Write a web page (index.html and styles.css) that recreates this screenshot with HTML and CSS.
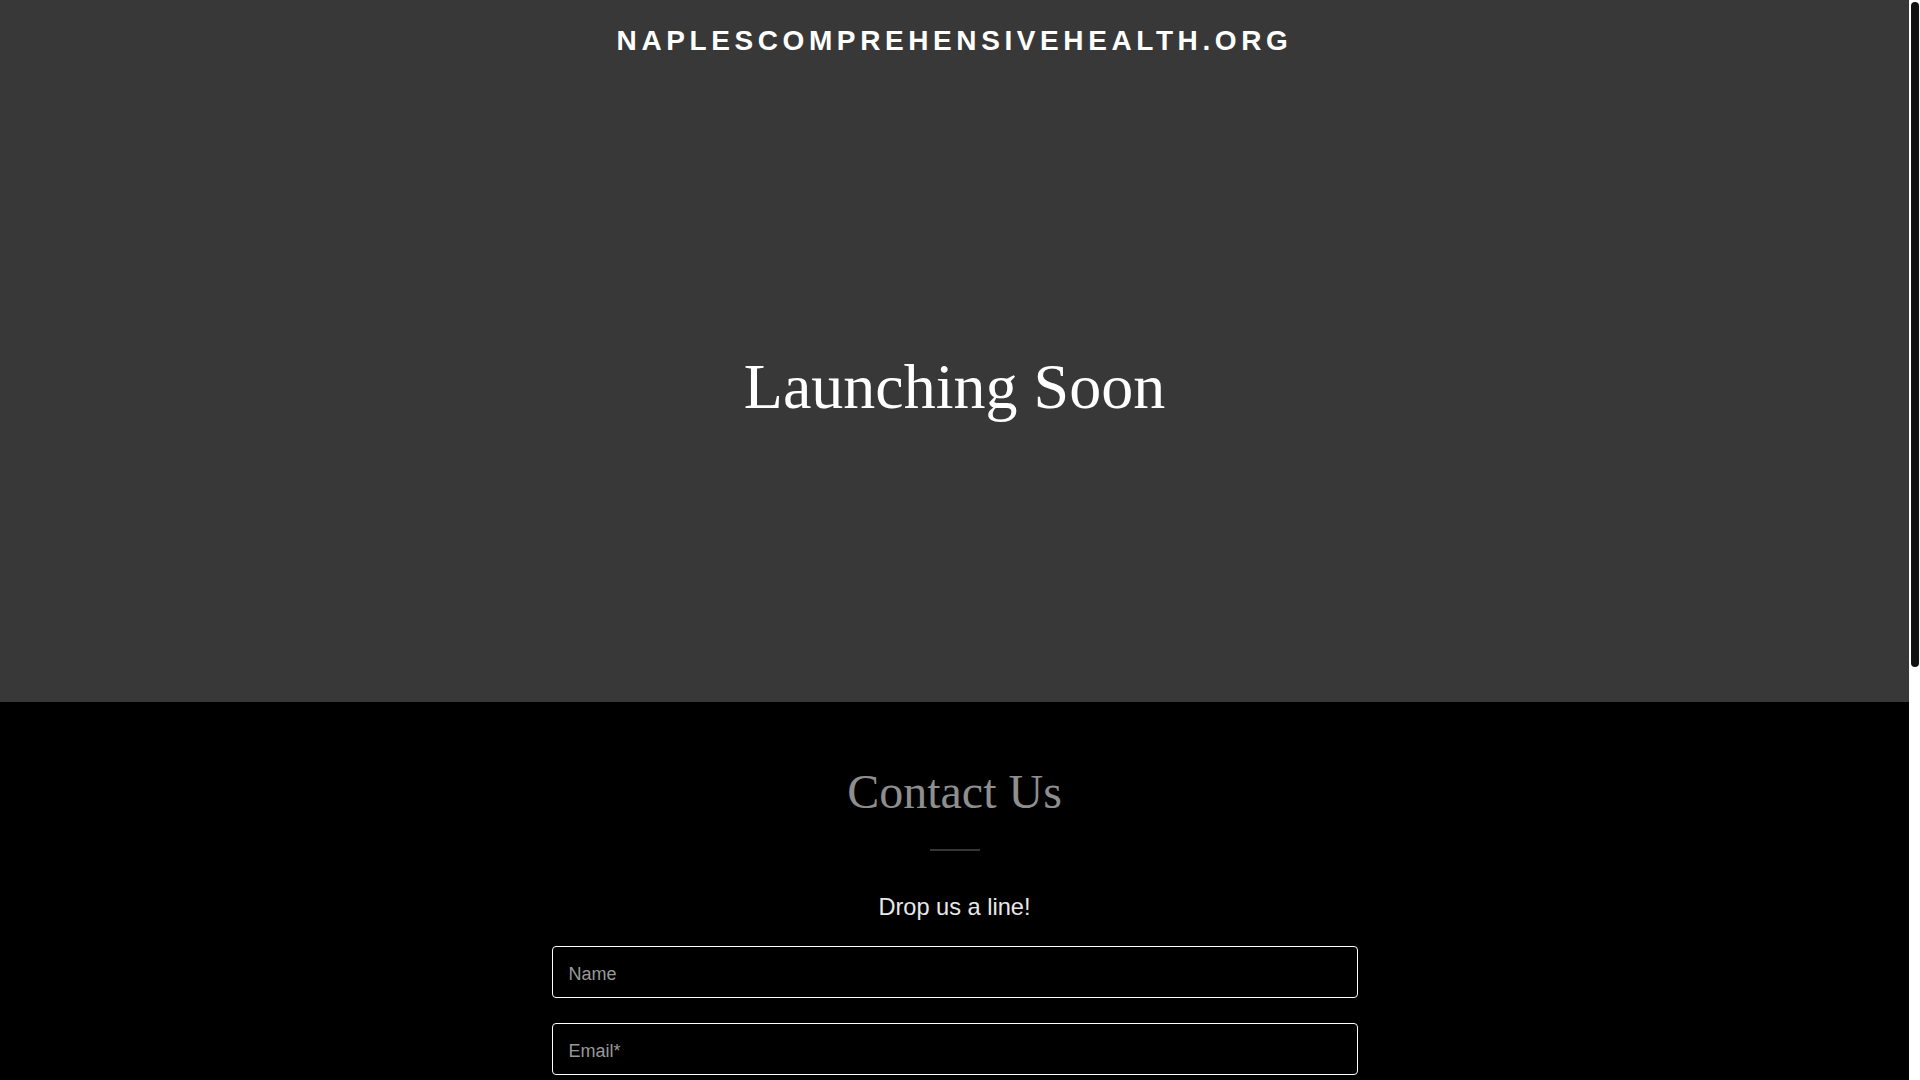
FILE: index.html
```html
<!DOCTYPE html>
<html lang="en">
<head>
<meta charset="utf-8">
<title>naplescomprehensivehealth.org</title>
<link rel="stylesheet" href="styles.css">
</head>
<body>
<section class="hero">
  <header class="site-header">
    <h1 class="site-title">NAPLESCOMPREHENSIVEHEALTH.ORG</h1>
  </header>
  <div class="hero-body">
    <h2 class="hero-heading">Launching Soon</h2>
  </div>
</section>
<section class="contact">
  <h2 class="contact-title">Contact Us</h2>
  <hr class="divider">
  <h4 class="contact-sub">Drop us a line!</h4>
  <form class="contact-form">
    <input class="field" type="text" placeholder="Name">
    <input class="field" type="email" placeholder="Email*">
  </form>
</section>
<div class="scrollbar" aria-hidden="true"><div class="scrollbar-thumb"></div></div>
</body>
</html>
```

FILE: styles.css
```css
html {
  background: #000;
}
body {
  margin: 0;
  padding-right: 11px;
  font-family: "Liberation Sans", Arial, sans-serif;
  color: #fff;
  background: #000;
}
.hero {
  background: #383838;
  height: 702px;
  display: flex;
  flex-direction: column;
}
.site-header {
  padding: 24px 0 22px;
  text-align: center;
}
.site-title {
  margin: 0;
  font-family: "Liberation Sans", Arial, sans-serif;
  font-weight: 700;
  font-size: 28px;
  line-height: 1.2;
  letter-spacing: 4.6px;
  color: #fff;
}
.hero-body {
  flex: 1;
  display: flex;
  align-items: center;
  justify-content: center;
  padding-bottom: 6px;
}
.hero-heading {
  margin: 0;
  font-family: "Liberation Serif", "Times New Roman", serif;
  font-weight: 400;
  font-size: 64px;
  line-height: 1.2;
  color: #fff;
}
.contact {
  padding: 61px 0 40px;
  display: flex;
  flex-direction: column;
  align-items: center;
}
.contact-title {
  margin: 0;
  font-family: "Liberation Serif", "Times New Roman", serif;
  font-weight: 400;
  font-size: 48px;
  line-height: 1.2;
  color: #8e8e8e;
}
.divider {
  width: 50px;
  height: 2px;
  margin: 28px 0 0;
  border: 0;
  background: #363636;
}
.contact-sub {
  margin: 42px 0 0;
  font-family: "Liberation Sans", Arial, sans-serif;
  font-weight: 400;
  font-size: 23.6px;
  line-height: 1.2;
  color: #e8e8e8;
}
.contact-form {
  margin-top: 25px;
  width: 806px;
  display: flex;
  flex-direction: column;
  gap: 25px;
}
.field {
  box-sizing: border-box;
  height: 52px;
  width: 100%;
  margin: 0;
  padding: 5px 16px 0;
  border: 1px solid #fff;
  border-radius: 4px;
  background: #000;
  color: #fff;
  font-family: "Liberation Sans", Arial, sans-serif;
  font-size: 18px;
  outline: none;
}
.field::placeholder {
  color: #999;
}
.scrollbar {
  position: fixed;
  top: 0;
  right: 0;
  width: 11px;
  height: 100vh;
  background: #fff;
}
.scrollbar-thumb {
  margin: 2px 1px 0 2px;
  height: 665px;
  border-radius: 4px;
  background: #111;
}
```
